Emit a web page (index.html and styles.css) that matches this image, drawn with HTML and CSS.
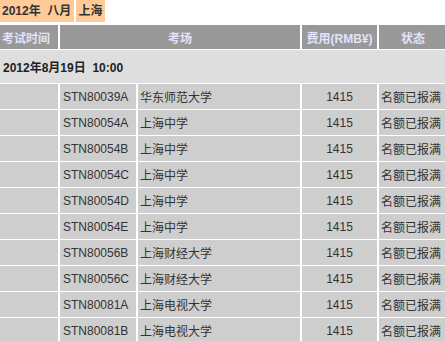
FILE: index.html
```html
<!DOCTYPE html>
<html>
<head>
<meta charset="utf-8">
<link rel="stylesheet" href="styles.css">
</head>
<body>
<div class="tabs">
  <span class="tab">2012年&nbsp;&nbsp;八月</span>
  <span class="tab">上海</span>
</div>
<table class="exam">
  <colgroup>
    <col class="c1"><col class="c2"><col class="c3"><col class="c4"><col class="c5">
  </colgroup>
  <thead>
    <tr class="head">
      <th class="left">考试时间</th>
      <th colspan="2">考场</th>
      <th>费用(RMB¥)</th>
      <th>状态</th>
    </tr>
  </thead>
  <tbody>
    <tr class="date"><td colspan="5">2012年8月19日&nbsp;&nbsp;10:00</td></tr>
    <tr class="row"><td></td><td>STN80039A</td><td>华东师范大学</td><td class="fee">1415</td><td>名额已报满</td></tr>
    <tr class="row"><td></td><td>STN80054A</td><td>上海中学</td><td class="fee">1415</td><td>名额已报满</td></tr>
    <tr class="row"><td></td><td>STN80054B</td><td>上海中学</td><td class="fee">1415</td><td>名额已报满</td></tr>
    <tr class="row"><td></td><td>STN80054C</td><td>上海中学</td><td class="fee">1415</td><td>名额已报满</td></tr>
    <tr class="row"><td></td><td>STN80054D</td><td>上海中学</td><td class="fee">1415</td><td>名额已报满</td></tr>
    <tr class="row"><td></td><td>STN80054E</td><td>上海中学</td><td class="fee">1415</td><td>名额已报满</td></tr>
    <tr class="row"><td></td><td>STN80056B</td><td>上海财经大学</td><td class="fee">1415</td><td>名额已报满</td></tr>
    <tr class="row"><td></td><td>STN80056C</td><td>上海财经大学</td><td class="fee">1415</td><td>名额已报满</td></tr>
    <tr class="row"><td></td><td>STN80081A</td><td>上海电视大学</td><td class="fee">1415</td><td>名额已报满</td></tr>
    <tr class="row"><td></td><td>STN80081B</td><td>上海电视大学</td><td class="fee">1415</td><td>名额已报满</td></tr>
  </tbody>
</table>
</body>
</html>
```

FILE: styles.css
```css
html, body {
  margin: 0;
  padding: 0;
  background: #fff;
  overflow: hidden;
}
body {
  font-family: "Liberation Sans", Arial, "Noto Sans CJK SC", sans-serif;
  font-size: 12px;
  color: #333;
}
.tabs {
  display: flex;
  gap: 2px;
  height: 22px;
}
.tab {
  background: #fdca98;
  font-weight: bold;
  color: #333;
  padding: 0 3px 0 2px;
  display: flex;
  align-items: center;
  line-height: 22px;
}
.exam {
  border-collapse: separate;
  border-spacing: 2px 1px;
  table-layout: fixed;
  width: 451px;
  margin: 2px 0 0 -2px;
}
.c1 { width: 58px; }
.c2 { width: 76px; }
.c3 { width: 162px; }
.c4 { width: 75px; }
.c5 { width: 68px; }
.exam th, .exam td {
  padding: 0 2px;
  white-space: nowrap;
  overflow: hidden;
  vertical-align: middle;
}
.head th {
  background: #999;
  color: #e2e2fb;
  font-weight: bold;
  height: 24px;
  text-align: center;
}
.head th.left {
  text-align: left;
}
.date td {
  background: #dedede;
  font-weight: bold;
  color: #222;
  height: 33px;
  padding-left: 3px;
}
.row td {
  background: #cecece;
  height: 25px;
  color: #333;
}
.row td:nth-child(2) {
  padding-left: 3px;
}
.row td.fee {
  text-align: center;
}
```
